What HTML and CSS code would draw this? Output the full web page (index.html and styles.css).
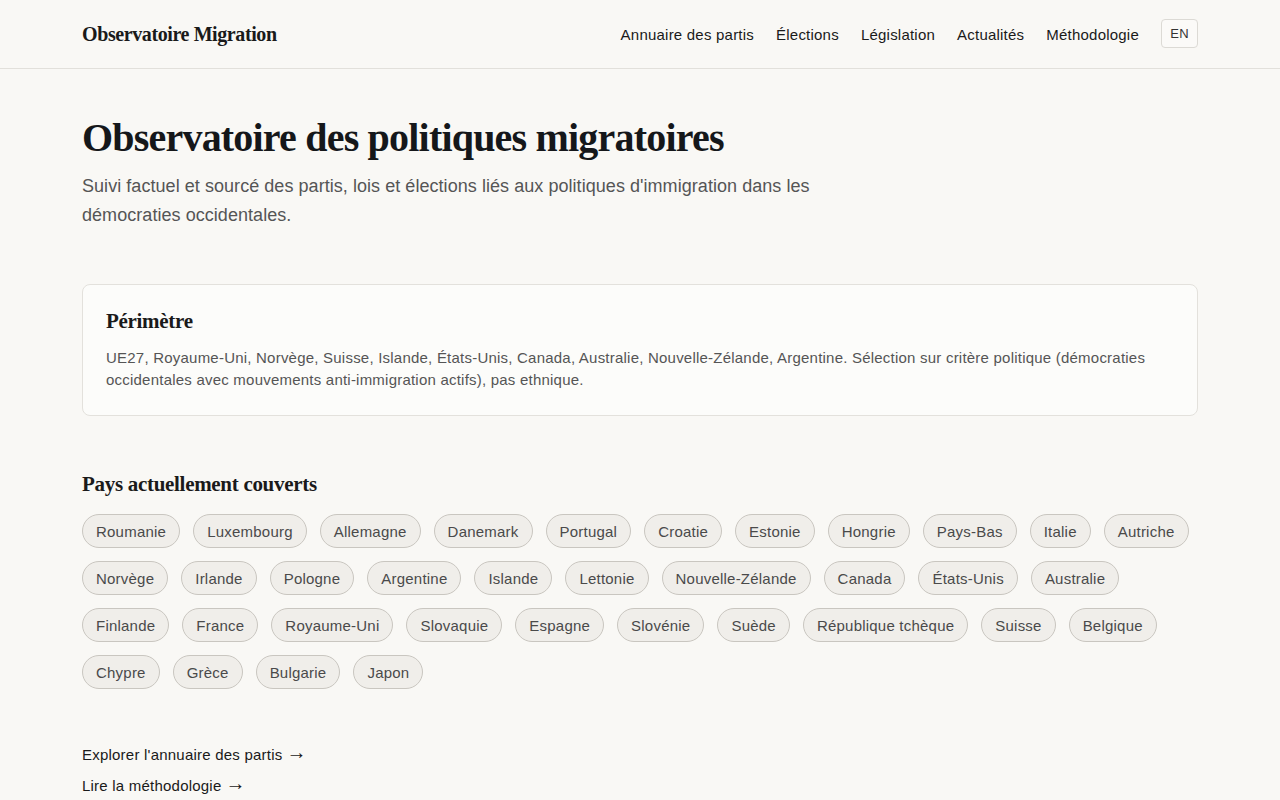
FILE: index.html
```html
<!DOCTYPE html>
<html lang="fr">
<head>
    <meta charset="UTF-8">
    <meta name="viewport" content="width=device-width, initial-scale=1.0">
    <title>Observatoire Migration</title>
    <link rel="stylesheet" href="styles.css">
</head>
<body>
    <header class="site-header">
        <div class="wrap header-inner">
            <a class="brand" href="#">Observatoire Migration</a>
            <nav class="main-nav">
                <a href="#">Annuaire des partis</a>
                <a href="#">Élections</a>
                <a href="#">Législation</a>
                <a href="#">Actualités</a>
                <a href="#">Méthodologie</a>
                <button class="lang-btn">EN</button>
            </nav>
        </div>
    </header>

    <main class="wrap">
        <section class="intro">
            <h1>Observatoire des politiques migratoires</h1>
            <p class="lead">Suivi factuel et sourcé des partis, lois et élections liés aux politiques d'immigration dans les démocraties occidentales.</p>
        </section>

        <section class="scope-card">
            <h2>Périmètre</h2>
            <p>UE27, Royaume-Uni, Norvège, Suisse, Islande, États-Unis, Canada, Australie, Nouvelle-Zélande, Argentine. Sélection sur critère politique (démocraties occidentales avec mouvements anti-immigration actifs), pas ethnique.</p>
        </section>

        <section class="countries">
            <h2>Pays actuellement couverts</h2>
            <div class="chips">
                <a class="chip" href="#">Roumanie</a>
                <a class="chip" href="#">Luxembourg</a>
                <a class="chip" href="#">Allemagne</a>
                <a class="chip" href="#">Danemark</a>
                <a class="chip" href="#">Portugal</a>
                <a class="chip" href="#">Croatie</a>
                <a class="chip" href="#">Estonie</a>
                <a class="chip" href="#">Hongrie</a>
                <a class="chip" href="#">Pays-Bas</a>
                <a class="chip" href="#">Italie</a>
                <a class="chip" href="#">Autriche</a>
                <a class="chip" href="#">Norvège</a>
                <a class="chip" href="#">Irlande</a>
                <a class="chip" href="#">Pologne</a>
                <a class="chip" href="#">Argentine</a>
                <a class="chip" href="#">Islande</a>
                <a class="chip" href="#">Lettonie</a>
                <a class="chip" href="#">Nouvelle-Zélande</a>
                <a class="chip" href="#">Canada</a>
                <a class="chip" href="#">États-Unis</a>
                <a class="chip" href="#">Australie</a>
                <a class="chip" href="#">Finlande</a>
                <a class="chip" href="#">France</a>
                <a class="chip" href="#">Royaume-Uni</a>
                <a class="chip" href="#">Slovaquie</a>
                <a class="chip" href="#">Espagne</a>
                <a class="chip" href="#">Slovénie</a>
                <a class="chip" href="#">Suède</a>
                <a class="chip" href="#">République tchèque</a>
                <a class="chip" href="#">Suisse</a>
                <a class="chip" href="#">Belgique</a>
                <a class="chip" href="#">Chypre</a>
                <a class="chip" href="#">Grèce</a>
                <a class="chip" href="#">Bulgarie</a>
                <a class="chip" href="#">Japon</a>
            </div>
        </section>

        <section class="more-links">
            <a href="#">Explorer l'annuaire des partis<span class="arrow">→</span></a>
            <a href="#">Lire la méthodologie<span class="arrow">→</span></a>
        </section>
    </main>
</body>
</html>
```

FILE: styles.css
```css
body {
    margin: 0;
    background: #f9f8f5;
    color: #1a1a1a;
    font-family: 'Liberation Sans', Arial, sans-serif;
    font-size: 15px;
    letter-spacing: 0.22px;
}

a {
    color: inherit;
    text-decoration: none;
}

.wrap {
    max-width: 1116px;
    margin: 0 auto;
}

/* top bar */
.site-header {
    border-bottom: 1px solid #e2e0db;
}

.header-inner {
    height: 68px;
    display: flex;
    align-items: center;
    justify-content: space-between;
}

.brand {
    font-family: 'Liberation Serif', 'Times New Roman', serif;
    font-weight: bold;
    font-size: 20px;
    letter-spacing: -0.4px;
    color: #1a1a1a;
}

.main-nav {
    display: flex;
    align-items: center;
    gap: 22px;
}

.main-nav a {
    font-size: 15px;
    color: #1a1a1a;
}

.lang-btn {
    font-family: inherit;
    font-size: 13px;
    letter-spacing: 0.3px;
    color: #333;
    background: #fbfaf8;
    border: 1px solid #dcdad5;
    border-radius: 4px;
    width: 37px;
    height: 29px;
    padding: 0;
    margin-top: -1px;
}

/* intro */
.intro {
    padding-top: 45px;
}

.intro h1 {
    margin: 0;
    font-family: 'Liberation Serif', 'Times New Roman', serif;
    font-weight: bold;
    font-size: 40px;
    letter-spacing: -0.8px;
    line-height: 48px;
    color: #15171a;
}

.lead {
    margin: 10px 0 0;
    max-width: 760px;
    font-size: 18px;
    line-height: 29px;
    letter-spacing: 0.05px;
    color: #555;
}

/* scope card */
.scope-card {
    margin-top: 54px;
    background: #fcfcfa;
    border: 1px solid #e3e1dc;
    border-radius: 8px;
    padding: 24px 23px 24px;
}

.scope-card h2,
.countries h2 {
    margin: 0;
    font-family: 'Liberation Serif', 'Times New Roman', serif;
    font-weight: bold;
    font-size: 21px;
    letter-spacing: -0.3px;
    color: #1a1a1a;
}

.scope-card p {
    margin: 13px 0 0;
    line-height: 22px;
    color: #555;
}

/* countries */
.countries {
    margin-top: 56px;
}

.chips {
    margin-top: 17px;
    display: flex;
    flex-wrap: wrap;
    gap: 13px 13px;
}

.chip {
    display: inline-flex;
    align-items: center;
    height: 32px;
    padding: 0 13px;
    border: 1px solid #c9c6c0;
    border-radius: 17px;
    background: #f0eeea;
    color: #4a4a4a;
    font-size: 15px;
}

/* footer links */
.more-links {
    margin-top: 57px;
    display: flex;
    flex-direction: column;
    align-items: flex-start;
    gap: 13px;
}

.more-links a {
    font-size: 15px;
    line-height: 18px;
    color: #1a1a1a;
}

.arrow {
    font-size: 20px;
    line-height: 0;
    letter-spacing: 0;
    margin-left: 4px;
    vertical-align: 1px;
}
```
